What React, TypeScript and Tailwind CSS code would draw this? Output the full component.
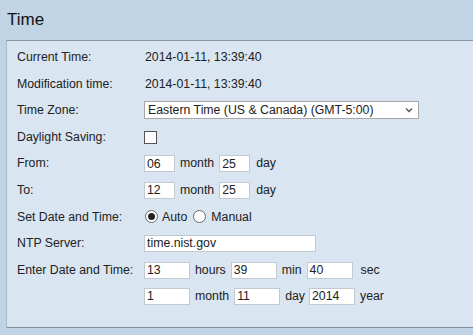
import React from 'react';

const font = { fontFamily: '"Liberation Sans", Arial, sans-serif' };

const Row: React.FC<{ label?: string; children?: React.ReactNode }> = ({ label, children }) => (
  <div className="flex h-[26.6px] items-center">
    <div className="w-[127px] shrink-0">{label}</div>
    <div className="flex items-center">{children}</div>
  </div>
);

const Field: React.FC<{ value: string; w: string; ml?: string }> = ({ value, w, ml = '' }) => (
  <div className={`${w} ${ml} flex h-[17px] items-center border border-[#c3c9d0] bg-white pl-[2px] leading-none text-[#222]`}>
    {value}
  </div>
);

const Radio: React.FC<{ checked?: boolean }> = ({ checked }) => (
  <span className="flex h-[13px] w-[13px] items-center justify-center rounded-full border border-[#6b6b6b] bg-white">
    {checked && <span className="h-[7px] w-[7px] rounded-full bg-[#222]" />}
  </span>
);

export default function App() {
  return (
    <div className="h-[335px] w-[473px] overflow-hidden bg-[#c1d4e6] text-[12.3px] text-[#222]" style={font}>
      <div className="h-[40px] pl-[7px] pt-[10px] text-[17px] leading-[20px] text-[#111]">Time</div>
      <div className="ml-[6px] h-[288px] border-t border-l border-b border-t-[#8797a6] border-l-[#a9b8c6] border-b-[#7f8f9e] bg-[#d9e5f1] pl-[10px] pt-[3px]">
        <Row label="Current Time:">
          <span className="ml-[1px]">2014-01-11, 13:39:40</span>
        </Row>
        <Row label="Modification time:">
          <span className="ml-[1px]">2014-01-11, 13:39:40</span>
        </Row>
        <Row label="Time Zone:">
          <div className="flex h-[18px] w-[275px] items-center justify-between border border-[#a6a6a6] bg-white pl-[3px] pr-[5px]">
            <span>Eastern Time (US &amp; Canada) (GMT-5:00)</span>
            <svg width="8" height="6" viewBox="0 0 8 6">
              <path d="M1 1.5 L4 4.5 L7 1.5" fill="none" stroke="#555" strokeWidth="1.3" />
            </svg>
          </div>
        </Row>
        <Row label="Daylight Saving:">
          <span className="h-[13px] w-[13px] border border-[#555] bg-white" />
        </Row>
        <Row label="From:">
          <Field value="06" w="w-[31px]" />
          <span className="ml-[5px]">month</span>
          <Field value="25" w="w-[31px]" ml="ml-[5px]" />
          <span className="ml-[6px]">day</span>
        </Row>
        <Row label="To:">
          <Field value="12" w="w-[31px]" />
          <span className="ml-[5px]">month</span>
          <Field value="25" w="w-[31px]" ml="ml-[5px]" />
          <span className="ml-[6px]">day</span>
        </Row>
        <Row label="Set Date and Time:">
          <span className="ml-[1px]"><Radio checked /></span>
          <span className="ml-[4px]">Auto</span>
          <span className="ml-[6px]"><Radio /></span>
          <span className="ml-[5px]">Manual</span>
        </Row>
        <Row label="NTP Server:">
          <Field value="time.nist.gov" w="w-[172px]" />
        </Row>
        <Row label="Enter Date and Time:">
          <Field value="13" w="w-[46px]" />
          <span className="ml-[5px]">hours</span>
          <Field value="39" w="w-[46px]" ml="ml-[5px]" />
          <span className="ml-[5px]">min</span>
          <Field value="40" w="w-[46px]" ml="ml-[5px]" />
          <span className="ml-[8px]">sec</span>
        </Row>
        <Row>
          <Field value="1" w="w-[46px]" />
          <span className="ml-[5px]">month</span>
          <Field value="11" w="w-[46px]" ml="ml-[5px]" />
          <span className="ml-[5px]">day</span>
          <Field value="2014" w="w-[46px]" ml="ml-[4px]" />
          <span className="ml-[5px]">year</span>
        </Row>
      </div>
    </div>
  );
}
